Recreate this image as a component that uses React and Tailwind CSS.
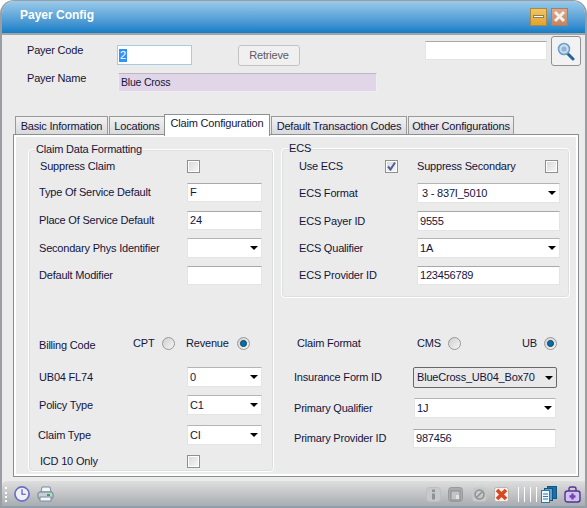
import { useState } from "react";

const Arrow = () => (
    <span className="ml-auto mr-[3px] w-0 h-0 border-l-[4px] border-r-[4px] border-t-[4px] border-l-transparent border-r-transparent border-t-black" />
);

const TextBox = ({ value, className = "" }) => (
    <div className={`flex items-center pl-[2px] bg-white border border-[#e4e4e4] border-t-[#a9a9a9] shrink-0 ${className}`}>
        {value}
    </div>
);

const Select = ({ value, className = "" }) => (
    <div className={`flex items-center pl-[2px] bg-white border border-[#e4e4e4] border-t-[#b4b4b4] shrink-0 ${className}`}>
        <span>{value}</span>
        <Arrow />
    </div>
);

const Check = ({ checked, className = "" }) => (
    <span className={`flex items-center justify-center w-[13px] h-[13px] border border-[#8e8f8f] bg-linear-to-br from-[#d8d8d8] to-[#f8f8f8] shrink-0 outline outline-white -outline-offset-2 ${className}`}>
        {checked && (
            <svg width="11" height="11" viewBox="0 0 11 11">
                <path d="M2 5.5 L4.5 8.5 L9 1.5" fill="none" stroke="#4a5f9c" strokeWidth="2" />
            </svg>
        )}
    </span>
);

const Radio = ({ checked, className = "" }) => (
    <span className={`flex items-center justify-center w-[13px] h-[13px] rounded-full border border-[#989898] bg-linear-to-br from-[#cfcfcf] to-[#f6f6f6] shrink-0 ${className}`}>
        {checked && <span className="w-[7px] h-[7px] rounded-full bg-[#0b6ea6] border border-[#083f63]" />}
    </span>
);

const Row = ({ label, labelWidth, labelClass = "", className = "", children }) => (
    <div className={`flex items-center ${className}`}>
        <span className={`shrink-0 ${labelClass}`} style={{ width: labelWidth }}>{label}</span>
        {children}
    </div>
);

const Tab = ({ label, active, className = "" }) => (
    <div className={active
        ? `relative z-10 flex items-start justify-center h-[22px] pt-[3px] whitespace-nowrap bg-white border border-b-0 border-[#8b9097] ${className}`
        : `flex items-center justify-center h-[19px] mt-[2px] whitespace-nowrap bg-linear-to-b from-[#f2f2f2] to-[#d8d8d8] border border-b-0 border-[#9a9a9a] ${className}`}>
        {label}
    </div>
);

const Group = ({ title, className = "", children }) => (
    <div className={`relative border border-[#dcdfe0] rounded-[3px] outline outline-white ${className}`}>
        <span className="absolute left-[6px] -top-[9px] bg-[#ebebeb] pr-[1px] leading-[15px]">{title}</span>
        {children}
    </div>
);

const SearchIcon = () => (
    <svg width="18" height="20" viewBox="0 0 18 20">
        <line x1="10" y1="12" x2="16" y2="18" stroke="#23639b" strokeWidth="3" strokeLinecap="round" />
        <circle cx="7" cy="8" r="5.5" fill="#c9dff0" stroke="#6c9ec7" strokeWidth="1.6" />
        <circle cx="7" cy="8" r="2.6" fill="#8fb4d8" />
    </svg>
);

const ClockIcon = () => (
    <svg width="16" height="16" viewBox="0 0 17 17">
        <circle cx="8.5" cy="8.5" r="7.5" fill="#eeeff9" stroke="#6a70c4" strokeWidth="1.8" />
        <path d="M8.5 3.5 V8.8 H12.5" fill="none" stroke="#4a52a8" strokeWidth="1.2" />
    </svg>
);

const PrintIcon = () => (
    <svg width="17" height="16" viewBox="0 0 17 16">
        <path d="M5 1 H13 L14 6 H4 Z" fill="#f4f6f8" stroke="#7d8b99" />
        <rect x="1" y="6" width="15" height="7" rx="2" fill="#c4d0da" stroke="#6f7e8c" />
        <rect x="3" y="11" width="11" height="4" fill="#f4f6f8" stroke="#7d8b99" />
        <rect x="10" y="8" width="3" height="2" fill="#27b14a" />
    </svg>
);

const InfoIcon = () => (
    <svg width="15" height="15" viewBox="0 0 15 15">
        <rect x="0.5" y="0.5" width="14" height="14" rx="3" fill="#c7c9ca" stroke="#bcbebf" />
        <rect x="6" y="2.5" width="3" height="2.5" fill="#8f9293" />
        <rect x="6" y="6.5" width="3" height="6" fill="#8f9293" />
    </svg>
);

const DocIcon = () => (
    <svg width="15" height="15" viewBox="0 0 15 15">
        <rect x="0.5" y="0.5" width="14" height="14" rx="3" fill="#a9abac" stroke="#98999a" />
        <rect x="3" y="4" width="9" height="9" fill="#c2c3c4" stroke="#8b8c8d" />
        <rect x="8" y="8" width="3" height="4" fill="#e4e4e4" />
    </svg>
);

const BanIcon = () => (
    <svg width="15" height="15" viewBox="0 0 15 15">
        <rect x="0.5" y="0.5" width="14" height="14" rx="3" fill="#c7c9ca" />
        <circle cx="7.5" cy="7.5" r="4.5" fill="none" stroke="#909394" strokeWidth="1.6" />
        <line x1="4.5" y1="10.5" x2="10.5" y2="4.5" stroke="#909394" strokeWidth="1.6" />
    </svg>
);

const DeleteIcon = () => (
    <svg width="15" height="15" viewBox="0 0 15 15">
        <rect x="0.5" y="0.5" width="14" height="14" rx="2" fill="#f3f1ef" stroke="#b9b5b1" />
        <path d="M3 3 L12 12 M12 3 L3 12" stroke="#d9481f" strokeWidth="3.6" />
    </svg>
);

const PagesIcon = () => (
    <svg width="16" height="17" viewBox="0 0 16 17">
        <rect x="6.5" y="0.5" width="9" height="12" fill="#1d6fa8" stroke="#15557f" />
        <rect x="3.5" y="2.5" width="8" height="12" fill="#5ba6d6" stroke="#15557f" />
        <rect x="0.5" y="4.5" width="8" height="12" fill="#f3f8fc" stroke="#2b79ad" />
        <path d="M2 8 H7 M2 10.5 H7 M2 13 H7" stroke="#2b79ad" />
    </svg>
);

const MedIcon = () => (
    <svg width="17" height="17" viewBox="0 0 17 17">
        <path d="M5 5 V3 Q5 1 7 1 H10 Q12 1 12 3 V5" fill="none" stroke="#55309c" strokeWidth="1.4" />
        <rect x="1" y="5" width="15" height="11" rx="2.5" fill="#cfc3ea" stroke="#55309c" strokeWidth="1.4" />
        <path d="M8.5 7.5 V13.5 M5.5 10.5 H11.5" stroke="#7a3fb5" strokeWidth="2.4" />
    </svg>
);

const App = () => {
    const [tab] = useState("Claim Configuration");
    const tabs = [
        { label: "Basic Information", className: "w-[93px]" },
        { label: "Locations", className: "w-[56px] ml-[1px]" },
        { label: "Claim Configuration", className: "w-[106px] -ml-[1px]" },
        { label: "Default Transaction Codes", className: "w-[136px] ml-[1px]" },
        { label: "Other Configurations", className: "w-[106px] ml-[1px]" },
    ];

    return (
        <div className="w-[587px] h-[508px] bg-white overflow-hidden text-[11px] tracking-[-0.2px] leading-none text-[#14143c]" style={{ fontFamily: '"Liberation Sans", Arial, sans-serif' }}>
            <div className="w-full h-full flex flex-col bg-[#ebebeb] border-x-2 border-t border-[#9a9ea3] rounded-t-[14px] overflow-hidden">
                {/* title bar */}
                <div className="flex items-center h-[32px] shrink-0 pl-[18px] pr-[17px] pb-[1px] bg-linear-to-b from-[#9acbe9] to-[#0a7ec6]">
                    <span className="-mt-[3px] text-white font-bold text-[12px] tracking-normal">Payer Config</span>
                    <span className="ml-auto w-[17px] h-[18px] flex items-center justify-center bg-linear-to-b from-[#f2c65e] to-[#e2a32e] border border-[#a9894a]">
                        <span className="w-[11px] h-[3px] bg-white border border-[#8b7d5c]" />
                    </span>
                    <span className="ml-[4px] w-[17px] h-[18px] flex items-center justify-center bg-linear-to-b from-[#dba98e] to-[#c58460] border border-[#a57f66]">
                        <svg width="13" height="13" viewBox="0 0 13 13">
                            <path d="M2 2 L11 11 M11 2 L2 11" stroke="#f5f1ea" strokeWidth="3" />
                        </svg>
                    </span>
                </div>
                <div className="h-[2px] shrink-0 bg-[#a2a4a6]" />

                {/* payer header */}
                <div className="flex shrink-0 h-[79px] pl-[25px]">
                    <div className="flex flex-col">
                        <Row label="Payer Code" labelWidth={90} className="mt-[9px]" labelClass="-mt-[10px]">
                            <div className="w-[75px] h-[20px] flex items-center pl-[1px] bg-white border border-[#a8cbe4]">
                                <span className="bg-[#3390ff] text-white px-[1px] py-[1px]">2</span>
                            </div>
                            <div className="w-[62px] h-[21px] ml-[46px] mt-[1px] flex items-center justify-center rounded-[3px] bg-[#f0f0f0] border border-[#c3c3c3] text-[#5a5a66]">Retrieve</div>
                        </Row>
                        <Row label="Payer Name" labelWidth={91} className="mt-[7px]" labelClass="-mt-[9px]">
                            <TextBox value="Blue Cross" className="w-[259px] h-[19px] bg-[#e0d6e8]! border-[#f1eef3]! border-t-[#bdb6c4]! text-[10.5px]" />
                        </Row>
                    </div>
                    <div className="flex items-start ml-auto mr-[4px]">
                        <div className="w-[122px] h-[19px] mt-[6px] bg-white border border-[#e4e4e4] border-t-[#a9a9a9]" />
                        <div className="w-[30px] h-[30px] ml-[4px] mt-[1px] flex items-center justify-center rounded-[3px] bg-[#f2f2f2] border border-[#8d9094]">
                            <SearchIcon />
                        </div>
                    </div>
                </div>

                {/* tabs */}
                <div className="flex items-start h-[20px] shrink-0 ml-[13px]">
                    {tabs.map((t) => (
                        <Tab key={t.label} label={t.label} active={t.label === tab} className={t.className} />
                    ))}
                </div>

                {/* tab panel */}
                <div className="flex shrink-0 gap-[9px] w-[566px] h-[343px] ml-[11px] pl-[15px] pt-[15px] bg-[#ebebeb] border border-[#8b9097] outline-2 outline-white -outline-offset-3">
                    <Group title="Claim Data Formatting" className="w-[244px] h-[321px] shrink-0 pl-[9px]">
                        <Row label="Suppress Claim" labelWidth={147} labelClass="ml-[1px]" className="h-[13px] mt-[9px]">
                            <Check />
                        </Row>
                        <Row label="Type Of Service Default" labelWidth={148} className="h-[19px] mt-[10px]">
                            <TextBox value="F" className="w-[75px] h-[19px]" />
                        </Row>
                        <Row label="Place Of Service Default" labelWidth={148} className="h-[19px] mt-[9px]">
                            <TextBox value="24" className="w-[75px] h-[19px]" />
                        </Row>
                        <Row label="Secondary Phys Identifier" labelWidth={148} className="h-[20px] mt-[8px]">
                            <Select value="" className="w-[75px] h-[20px]" />
                        </Row>
                        <Row label="Default Modifier" labelWidth={148} className="h-[19px] mt-[8px]">
                            <TextBox value="" className="w-[75px] h-[19px]" />
                        </Row>
                        <div className="flex items-center h-[14px] mt-[51px]">
                            <span className="w-[94px] mt-[4px]">Billing Code</span>
                            <span className="w-[29px]">CPT</span>
                            <Radio />
                            <span className="ml-[11px] w-[51px]">Revenue</span>
                            <Radio checked />
                        </div>
                        <Row label="UB04 FL74" labelWidth={148} className="h-[20px] mt-[17px]">
                            <Select value="0" className="w-[75px] h-[20px]" />
                        </Row>
                        <Row label="Policy Type" labelWidth={148} className="h-[20px] mt-[8px]">
                            <Select value="C1" className="w-[75px] h-[20px]" />
                        </Row>
                        <Row label="Claim Type" labelWidth={149} labelClass="-ml-[1px]" className="h-[20px] mt-[10px]">
                            <Select value="CI" className="w-[75px] h-[20px]" />
                        </Row>
                        <Row label="ICD 10 Only" labelWidth={147} labelClass="ml-[1px]" className="h-[13px] mt-[10px]">
                            <Check />
                        </Row>
                    </Group>

                    <div className="flex flex-col w-[287px] shrink-0 -mt-[1px]">
                        <Group title="ECS" className="w-[287px] h-[148px] pl-[16px]">
                            <div className="flex items-center h-[13px] mt-[10px]">
                                <span className="w-[86px]">Use ECS</span>
                                <Check checked />
                                <span className="ml-[19px] w-[128px]">Suppress Secondary</span>
                                <Check />
                            </div>
                            <Row label="ECS Format" labelWidth={118} className="h-[20px] mt-[10px]">
                                <Select value=" 3 - 837I_5010" className="w-[143px] h-[20px] pl-[4px]!" />
                            </Row>
                            <Row label="ECS Payer ID" labelWidth={118} className="h-[20px] mt-[8px]">
                                <TextBox value="9555" className="w-[143px] h-[20px]" />
                            </Row>
                            <Row label="ECS Qualifier" labelWidth={118} className="h-[20px] mt-[7px]">
                                <Select value="1A" className="w-[143px] h-[20px]" />
                            </Row>
                            <Row label="ECS Provider ID" labelWidth={118} className="h-[19px] mt-[8px]">
                                <TextBox value="123456789" className="w-[143px] h-[19px]" />
                            </Row>
                        </Group>

                        <div className="flex items-center h-[14px] mt-[39px] ml-[15px]">
                            <span className="w-[120px]">Claim Format</span>
                            <span className="w-[31px]">CMS</span>
                            <Radio />
                            <span className="ml-[61px] w-[22px]">UB</span>
                            <Radio checked />
                        </div>
                        <Row label="Insurance Form ID" labelWidth={119} className="h-[21px] mt-[17px] ml-[12px]">
                            <div className="flex items-center w-[144px] h-[21px] pl-[3px] rounded-[2px] bg-[#e9e9e9] border border-[#66696c]">
                                <span>BlueCross_UB04_Box70</span>
                                <Arrow />
                            </div>
                        </Row>
                        <Row label="Primary Qualifier" labelWidth={120} className="h-[20px] mt-[10px] ml-[12px]">
                            <Select value="1J" className="w-[142px] h-[20px]" />
                        </Row>
                        <Row label="Primary Provider ID" labelWidth={119} className="h-[19px] mt-[11px] ml-[12px]">
                            <TextBox value="987456" className="w-[143px] h-[19px]" />
                        </Row>
                    </div>
                </div>

                {/* status bar */}
                <div className="relative flex items-center flex-1 mt-[4px] pl-[12px] pr-[4px] pt-[1px] rounded-tl-[5px] bg-linear-to-b from-[#dedede] to-[#a9adb1] border-b-2 border-[#8fa0ad]">
                    <span className="absolute left-[3px] top-[6px] h-[15px] border-l-2 border-dotted border-white" />
                    <ClockIcon />
                    <span className="ml-[7px]"><PrintIcon /></span>
                    <span className="ml-auto"><InfoIcon /></span>
                    <span className="ml-[7px]"><DocIcon /></span>
                    <span className="ml-[9px]"><BanIcon /></span>
                    <span className="ml-[7px]"><DeleteIcon /></span>
                    <span className="ml-[9px] flex gap-[5px] h-[15px]">
                        <span className="w-[1px] bg-white" />
                        <span className="w-[1px] bg-white" />
                        <span className="w-[1px] bg-white" />
                        <span className="w-[1px] bg-white" />
                    </span>
                    <span className="ml-[4px]"><PagesIcon /></span>
                    <span className="ml-[7px]"><MedIcon /></span>
                </div>
            </div>
        </div>
    );
};

export default App;
